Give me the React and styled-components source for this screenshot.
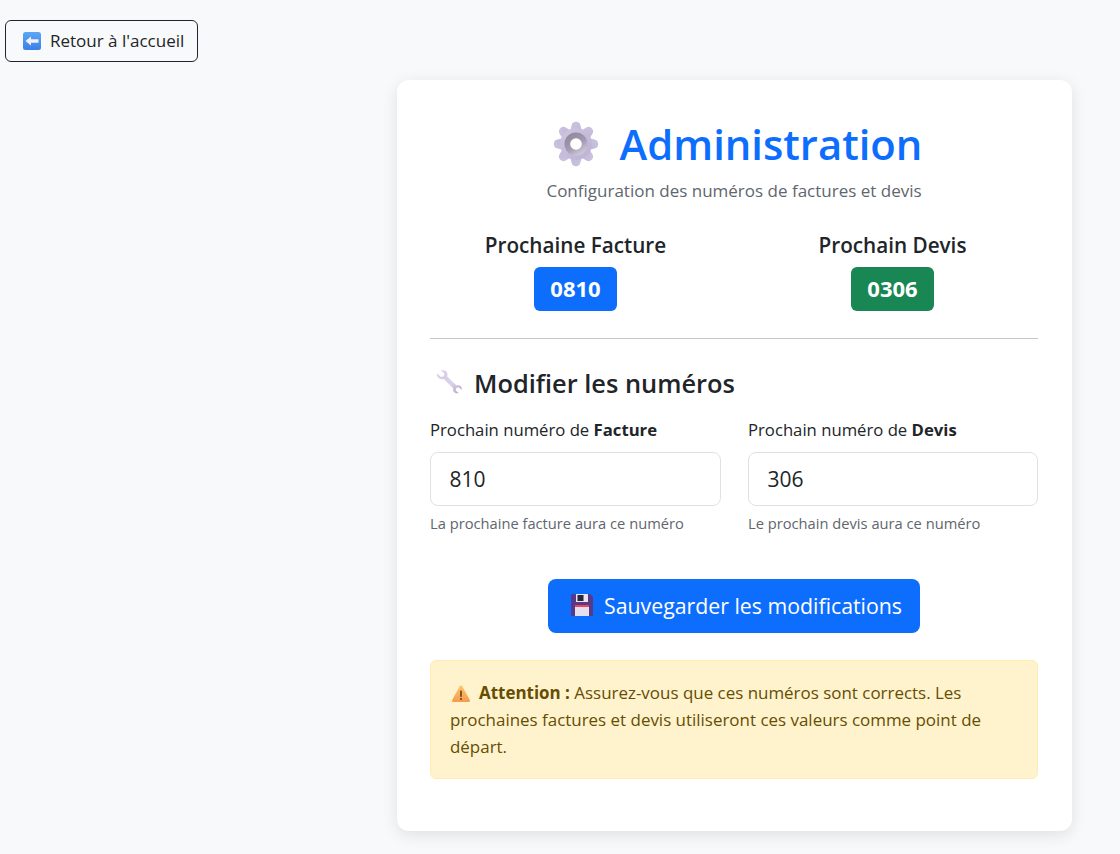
import React from 'react';
import styled, { createGlobalStyle } from 'styled-components';

const GlobalStyle = createGlobalStyle`
  * { box-sizing: border-box; }
  body {
    margin: 0;
    background: #f8f9fa;
    color: #212529;
    font-family: "Open Sans", "Liberation Sans", sans-serif;
  }
`;

const Page = styled.div`
  padding: 20px 48px 23px 5px;
`;

const BackButton = styled.button`
  display: flex;
  align-items: center;
  gap: 8px;
  width: 193px;
  height: 42px;
  padding: 0 0 1px 16px;
  background: transparent;
  border: 1px solid #212529;
  border-radius: 6px;
  color: #212529;
  font: inherit;
  font-size: 17px;
  white-space: nowrap;
`;

const Card = styled.main`
  width: 675px;
  height: 751px;
  margin: 18px 0 0 auto;
  padding: 33px 34px 33px 33px;
  background: #fff;
  border-radius: 12px;
  box-shadow: 0 4px 16px rgba(0, 0, 0, 0.1);
`;

const Header = styled.header`
  text-align: center;
`;

const Title = styled.h1`
  display: flex;
  align-items: center;
  justify-content: center;
  gap: 21px;
  height: 58px;
  margin: 2px 0 0;
  padding-left: 7px;
  color: #0d6efd;
  font-size: 41.8px;
  font-weight: 600;
  line-height: 58px;
  white-space: nowrap;
`;

const Subtitle = styled.p`
  margin: 6px 0 0;
  color: #5f666d;
  font-size: 17px;
  line-height: 24px;
`;

const Counters = styled.section`
  display: grid;
  grid-template-columns: 291px 289px;
  column-gap: 27px;
  margin-top: 27px;
  padding-bottom: 27px;
  border-bottom: 1px solid #c6c7c8;
`;

const Counter = styled.div`
  display: flex;
  flex-direction: column;
  align-items: center;
`;

const CounterLabel = styled.h2`
  margin: 0;
  font-size: 20.7px;
  font-weight: 600;
  line-height: 30px;
`;

const Badge = styled.span`
  display: block;
  width: 83px;
  height: 44px;
  margin-top: 7px;
  background: ${(p) => p.$color};
  border-radius: 6px;
  color: #fff;
  font-size: 22px;
  font-weight: 700;
  line-height: 42px;
  text-align: center;
`;

const SectionTitle = styled.h3`
  display: flex;
  align-items: center;
  gap: 12px;
  height: 34px;
  margin: 27px 0 0 4px;
  font-size: 25.4px;
  font-weight: 600;
`;

const Fields = styled.form`
  display: grid;
  grid-template-columns: 291px 290px;
  justify-content: space-between;
  margin-top: 18px;
`;

const Field = styled.div`
  display: flex;
  flex-direction: column;
`;

const FieldLabel = styled.label`
  font-size: 16.7px;
  line-height: 24px;

  b { font-weight: 700; }
`;

const Input = styled.input`
  width: 100%;
  height: 54px;
  margin-top: 10px;
  padding: 0 18.5px;
  background: #fff;
  border: 1px solid #dee2e6;
  border-radius: 8px;
  color: #212529;
  font: inherit;
  font-size: 21px;
`;

const Hint = styled.small`
  margin-top: 7px;
  color: #5f666d;
  font-size: 14.7px;
  line-height: 21px;
`;

const Actions = styled.div`
  display: flex;
  justify-content: center;
  margin-top: 45px;
`;

const SaveButton = styled.button`
  display: flex;
  align-items: center;
  gap: 10px;
  width: 372px;
  height: 54px;
  padding: 0 0 2px 22px;
  background: #0d6efd;
  border: 0;
  border-radius: 8px;
  color: #fff;
  font: inherit;
  font-size: 21.3px;
  white-space: nowrap;
`;

const Alert = styled.aside`
  height: 119px;
  margin-top: 27px;
  padding: 18px 19px;
  background: #fff3cd;
  border: 1px solid #ffecb5;
  border-radius: 6px;
  color: #664d03;
  font-size: 16.95px;
  line-height: 27px;

  b { font-weight: 700; }
  svg { vertical-align: -4px; margin: 0 8px 0 1px; }
`;

const ArrowIcon = () => (
  <svg width="20" height="20" viewBox="0 0 20 20">
    <defs>
      <linearGradient id="arrowBg" x1="0" y1="0" x2="0" y2="1">
        <stop offset="0" stopColor="#5ca8f5" />
        <stop offset="1" stopColor="#3d7fe8" />
      </linearGradient>
    </defs>
    <rect x="1" y="1" width="18" height="18" rx="2.5" fill="url(#arrowBg)" />
    <path d="M3.5 10 9 5.5V8.2h7.5v3.6H9v2.7z" fill="#f3f1f8" />
  </svg>
);

const GearIcon = () => {
  const teeth = [0, 45, 90, 135, 180, 225, 270, 315];
  return (
    <svg width="46" height="46" viewBox="0 0 46 46">
      <defs>
        <linearGradient id="gearBody" x1="0" y1="0" x2="1" y2="1">
          <stop offset="0" stopColor="#cfc6e2" />
          <stop offset="1" stopColor="#bdb1d3" />
        </linearGradient>
        <linearGradient id="gearRing" x1="0.2" y1="0" x2="0.8" y2="1">
          <stop offset="0" stopColor="#8f8699" />
          <stop offset="0.55" stopColor="#a59bb3" />
          <stop offset="1" stopColor="#d8d2e2" />
        </linearGradient>
      </defs>
      {teeth.map((a) => (
        <path
          key={a}
          d="M16 16 18.500 4.500a4.600 4.600 0 0 1 9 0L30 16z"
          fill="url(#gearBody)"
          transform={`rotate(${a} 23 23)`}
        />
      ))}
      <circle cx="23" cy="23" r="16" fill="url(#gearBody)" />
      <circle cx="23" cy="23" r="11.500" fill="url(#gearRing)" />
      <circle cx="23" cy="23" r="5.800" fill="#fff" />
    </svg>
  );
};

const WrenchIcon = () => (
  <svg width="28" height="28" viewBox="0 0 28 28">
    <defs>
      <linearGradient id="wrenchFill" x1="0" y1="0" x2="1" y2="1">
        <stop offset="0" stopColor="#d6cee4" />
        <stop offset="0.6" stopColor="#d9d0ea" />
        <stop offset="1" stopColor="#aea6bb" />
      </linearGradient>
    </defs>
    <path
      d="M3 4.5 7 8l2.7-.8.8-2.700L7 1.500c2.500-.8 5 0 6 2 .7 1.400.6 2.800.1 4l9.400 9c1-.5 2.400-.5 3.600.2 1.400.9 1.900 2.300 1.700 4l-3.200-2.500-2.400.9-.5 2.500 3 2.400c-1.800.6-3.600.3-4.800-1-1-1-1.100-2.500-.8-3.700L9.800 10c-1.500.6-3.300.5-4.800-.7C3.300 8 2.700 6.200 3 4.500z"
      fill="url(#wrenchFill)"
    />
  </svg>
);

const SaveIcon = () => (
  <svg width="24" height="24" viewBox="0 0 24 24">
    <path d="M1 2.500A1.500 1.500 0 0 1 2.500 1H20l3 3v17.500a1.500 1.500 0 0 1-1.500 1.500h-19A1.500 1.500 0 0 1 1 21.500z" fill="#57398a" />
    <rect x="6" y="1" width="12" height="8" fill="#e8e4ee" />
    <rect x="7.500" y="2" width="6" height="6" fill="#2b2340" />
    <rect x="5" y="12" width="14" height="11" fill="#e6dff0" />
    <rect x="5" y="12" width="14" height="2" fill="#f0425a" />
  </svg>
);

const WarningIcon = () => (
  <svg width="20" height="19" viewBox="0 0 20 19">
    <defs>
      <linearGradient id="warnFill" x1="0" y1="0" x2="0" y2="1">
        <stop offset="0" stopColor="#ffc66b" />
        <stop offset="1" stopColor="#f59a4c" />
      </linearGradient>
    </defs>
    <path d="M10 1.500c.6 0 1 .3 1.300.8l7.500 13.700c.5 1-.1 2-1.200 2H2.400c-1.100 0-1.700-1-1.200-2L8.700 2.300c.3-.5.700-.8 1.300-.8z" fill="url(#warnFill)" />
    <rect x="9.200" y="6.500" width="1.600" height="6.500" rx="0.800" fill="#6b3d1a" />
    <circle cx="10" cy="15" r="1" fill="#6b3d1a" />
  </svg>
);

export default function App() {
  return (
    <>
      <GlobalStyle />
      <Page>
        <BackButton type="button">
          <ArrowIcon />
          Retour à l'accueil
        </BackButton>
        <Card>
          <Header>
            <Title>
              <GearIcon />
              Administration
            </Title>
            <Subtitle>Configuration des numéros de factures et devis</Subtitle>
          </Header>
          <Counters>
            <Counter>
              <CounterLabel>Prochaine Facture</CounterLabel>
              <Badge $color="#0d6efd">0810</Badge>
            </Counter>
            <Counter>
              <CounterLabel>Prochain Devis</CounterLabel>
              <Badge $color="#198754">0306</Badge>
            </Counter>
          </Counters>
          <SectionTitle>
            <WrenchIcon />
            Modifier les numéros
          </SectionTitle>
          <Fields>
            <Field>
              <FieldLabel>Prochain numéro de <b>Facture</b></FieldLabel>
              <Input defaultValue="810" />
              <Hint>La prochaine facture aura ce numéro</Hint>
            </Field>
            <Field>
              <FieldLabel>Prochain numéro de <b>Devis</b></FieldLabel>
              <Input defaultValue="306" />
              <Hint>Le prochain devis aura ce numéro</Hint>
            </Field>
          </Fields>
          <Actions>
            <SaveButton type="button">
              <SaveIcon />
              Sauvegarder les modifications
            </SaveButton>
          </Actions>
          <Alert>
            <WarningIcon />
            <b>Attention :</b> Assurez-vous que ces numéros sont corrects. Les prochaines factures et devis utiliseront ces valeurs comme point de départ.
          </Alert>
        </Card>
      </Page>
    </>
  );
}
